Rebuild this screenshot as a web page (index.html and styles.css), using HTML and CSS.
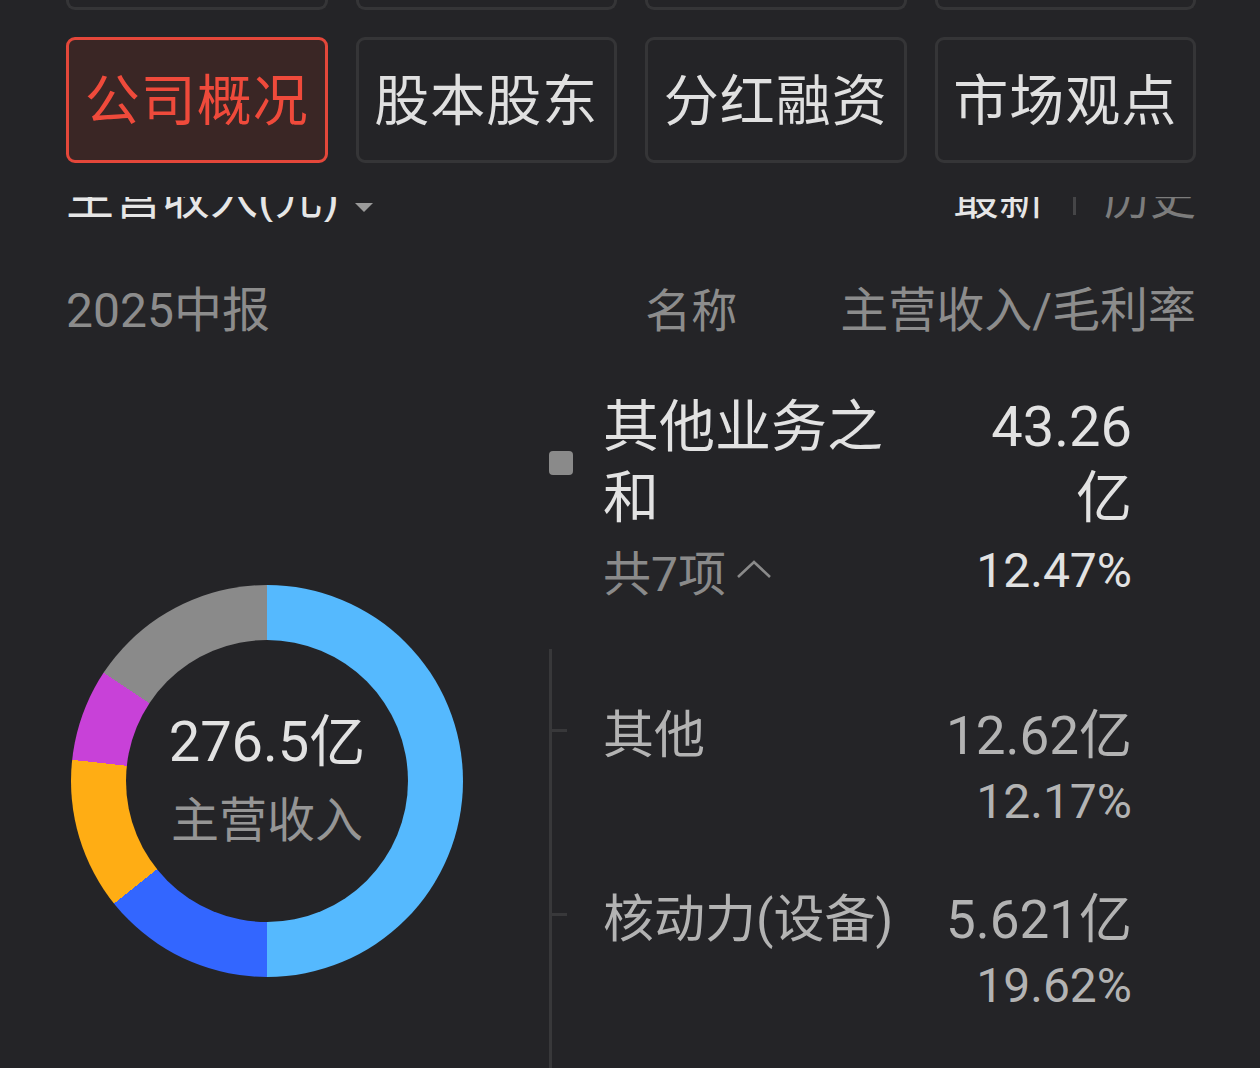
FILE: index.html
```html
<!DOCTYPE html>
<html lang="zh-CN">
<head>
<meta charset="utf-8">
<title>主营收入</title>
<link rel="stylesheet" href="styles.css">
</head>
<body>
<div class="page">
  <div class="prev-row">
    <div class="prev-card"></div>
    <div class="prev-card"></div>
    <div class="prev-card"></div>
    <div class="prev-card"></div>
  </div>

  <div class="tabs">
    <div class="tab tab-active">公司概况</div>
    <div class="tab">股本股东</div>
    <div class="tab">分红融资</div>
    <div class="tab">市场观点</div>
  </div>

  <div class="clip">
    <div class="sub-head">
      <div class="sub-title">主营收入(元)<span class="caret"></span></div>
      <div class="switch">
        <span class="sw-on">最新</span>
        <span class="sw-bar"></span>
        <span class="sw-off">历史</span>
      </div>
    </div>
  </div>

  <div class="col-head">
    <div class="period">2025中报</div>
    <div class="ch-name">名称</div>
    <div class="ch-val">主营收入/毛利率</div>
  </div>

  <div class="main">
    <div class="chart-col">
      <div class="donut">
        <div class="donut-hole">
          <div class="total">276.5亿</div>
          <div class="total-label">主营收入</div>
        </div>
      </div>
    </div>

    <div class="list">
      <div class="group">
        <div class="g-row">
          <span class="marker"></span>
          <div class="g-name">其他业务之和</div>
          <div class="g-val">43.26亿</div>
        </div>
        <div class="g-row2">
          <div class="g-count">共7项<svg class="chev" width="36" height="22" viewBox="0 0 36 22"><polyline points="2,19 18,4 34,19" fill="none" stroke="#8a8a8a" stroke-width="2.6"/></svg></div>
          <div class="pct pct-main">12.47%</div>
        </div>
      </div>

      <div class="sub">
        <div class="s-row">
          <span class="tick"></span>
          <div class="s-name">其他</div>
          <div class="s-val">12.62亿</div>
        </div>
        <div class="pct">12.17%</div>

        <div class="s-row s-next">
          <span class="tick"></span>
          <div class="s-name">核动力(设备)</div>
          <div class="s-val">5.621亿</div>
        </div>
        <div class="pct">19.62%</div>
      </div>
    </div>
  </div>
</div>
</body>
</html>
```

FILE: styles.css
```css
html, body {
  margin: 0;
  padding: 0;
  background: #242427;
}
body {
  font-family: Roboto, "Noto Sans CJK SC", sans-serif;
  color: #e0e0e0;
  overflow: hidden;
  height: 1068px;
}
.page {
  padding: 0 64px 0 66px;
}

/* previous row of cards (only bottom edge visible) */
.prev-row {
  display: grid;
  grid-template-columns: repeat(4, 1fr);
  gap: 28px;
  height: 10px;
}
.prev-card {
  border: 3px solid #353537;
  border-top: none;
  border-radius: 0 0 9px 9px;
}

/* tabs */
.tabs {
  display: grid;
  grid-template-columns: repeat(4, 1fr);
  gap: 28px;
  margin-top: 27px;
}
.tab {
  height: 126px;
  box-sizing: border-box;
  border: 3px solid #353537;
  border-radius: 9px;
  display: flex;
  align-items: center;
  justify-content: center;
  padding-bottom: 8px;
  font-size: 55px;
  letter-spacing: 1px;
  color: #e0e0e0;
}
.tab-active {
  border-color: #e4473a;
  background: #3a2625;
  color: #ef4a3b;
}

/* clipped sub heading */
.clip {
  height: 25px;
  overflow: hidden;
  margin-top: 34px;
}
.sub-head {
  display: flex;
  justify-content: space-between;
  align-items: center;
  margin-top: -23px;
  font-size: 48px;
  line-height: 48px;
}
.sub-title {
  display: flex;
  align-items: center;
  color: #e6e6e6;
}
.caret {
  width: 0;
  height: 0;
  border-left: 9px solid transparent;
  border-right: 9px solid transparent;
  border-top: 9px solid #9a9a9a;
  margin-left: 16px;
  margin-top: 18px;
}
.switch {
  display: flex;
  align-items: center;
  font-size: 46px;
}
.sw-on { color: #e6e6e6; }
.sw-bar {
  width: 3px;
  height: 34px;
  background: #454547;
  margin: 0 28px;
}
.sw-off { color: #7c7c7c; }

/* column header */
.col-head {
  display: flex;
  align-items: center;
  margin-top: 59px;
  font-size: 48px;
  line-height: 60px;
  color: #8c8c8c;
}
.period { flex: 1; }
.ch-name { margin-right: 103px; font-size: 46px; }
.ch-val { font-size: 48px; }

/* main */
.main {
  display: flex;
  margin-top: 51px;
}
.chart-col {
  width: 483px;
  flex: none;
}
.donut {
  width: 392px;
  height: 392px;
  border-radius: 50%;
  margin: 193px 0 0 5px;
  background: conic-gradient(
    #55b9fe 0deg 180deg,
    #3366ff 180deg 231.3deg,
    #ffad14 231.3deg 276.2deg,
    #c841d8 276.2deg 303.5deg,
    #8a8a8a 303.5deg 360deg
  );
  display: flex;
  align-items: center;
  justify-content: center;
}
.donut-hole {
  width: 282px;
  height: 282px;
  border-radius: 50%;
  background: #242427;
  display: flex;
  flex-direction: column;
  align-items: center;
  justify-content: center;
}
.total {
  font-size: 56px;
  line-height: 80px;
  color: #e2e2e2;
}
.total-label {
  font-size: 48px;
  line-height: 78px;
  color: #959595;
}

.list {
  flex: 1;
  padding-right: 64px;
}
.group {
  color: #e2e2e2;
}
.g-row {
  display: flex;
  align-items: center;
}
.marker {
  width: 24px;
  height: 24px;
  border-radius: 4px;
  background: #8a8a8a;
  flex: none;
  margin-right: 30px;
}
.g-name {
  width: 310px;
  font-size: 56px;
  line-height: 71px;
}
.g-val {
  flex: 1;
  text-align: right;
  font-size: 56px;
  line-height: 71px;
  padding-left: 30px;
  width: 160px;
}
.g-row2 {
  display: flex;
  align-items: center;
  padding-left: 54px;
  height: 72px;
}
.g-count {
  flex: 1;
  font-size: 48px;
  color: #8a8a8a;
  display: flex;
  align-items: center;
}
.chev { margin-left: 10px; margin-top: -2px; }
.pct {
  font-size: 48px;
  line-height: 71px;
  text-align: right;
  color: #b3b3b3;
}
.pct-main { color: #e2e2e2; }

.sub {
  margin-top: 43px;
  border-left: 3px solid #38383a;
  padding-top: 46px;
  padding-bottom: 120px;
  color: #b3b3b3;
}
.s-row {
  display: flex;
  align-items: center;
  height: 71px;
}
.s-next { margin-top: 42px; }
.tick {
  width: 15px;
  height: 3px;
  background: #38383a;
  flex: none;
  margin-right: 36px;
}
.s-name {
  flex: 1;
  font-size: 51px;
}
.s-val {
  font-size: 53px;
}
```
